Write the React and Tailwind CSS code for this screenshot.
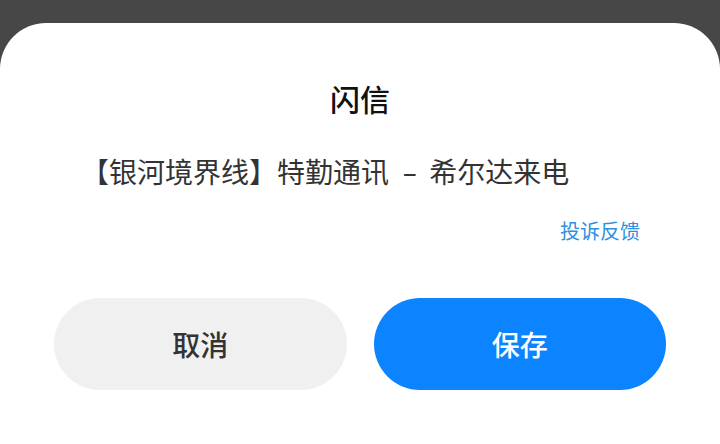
export default function App() {
  const font = { fontFamily: '"Noto Sans CJK SC", "Noto Sans", sans-serif' };
  return (
    <div className="w-[720px] h-[444px] bg-[#474747] flex flex-col overflow-hidden" style={font}>
      <div className="h-[23px] shrink-0" />
      <div className="flex-1 bg-white rounded-t-[46px] flex flex-col pt-[57px] px-[54px]">
        <div className="text-center text-[30px] leading-[36px] font-medium text-[#111]">闪信</div>
        <div className="mt-[37px] pl-[27px] text-[28px] leading-[36px] text-[#333] whitespace-nowrap">
          【银河境界线】特勤通讯<span className="pl-[10px] pr-[8px]"> <span className="inline-block scale-x-[1.6]">-</span> </span>希尔达来电
        </div>
        <div className="mt-[29px] flex justify-end pr-[26px]">
          <span className="text-[20px] leading-[26px] text-[#2f8fe0]">投诉反馈</span>
        </div>
        <div className="mt-[54px] flex gap-[27px]">
          <button className="flex-1 h-[92px] rounded-full bg-[#f0f0f0] text-[28px] font-medium text-[#333]">取消</button>
          <button className="flex-1 h-[92px] rounded-full bg-[#0d84ff] text-[28px] font-medium text-white">保存</button>
        </div>
      </div>
    </div>
  );
}
